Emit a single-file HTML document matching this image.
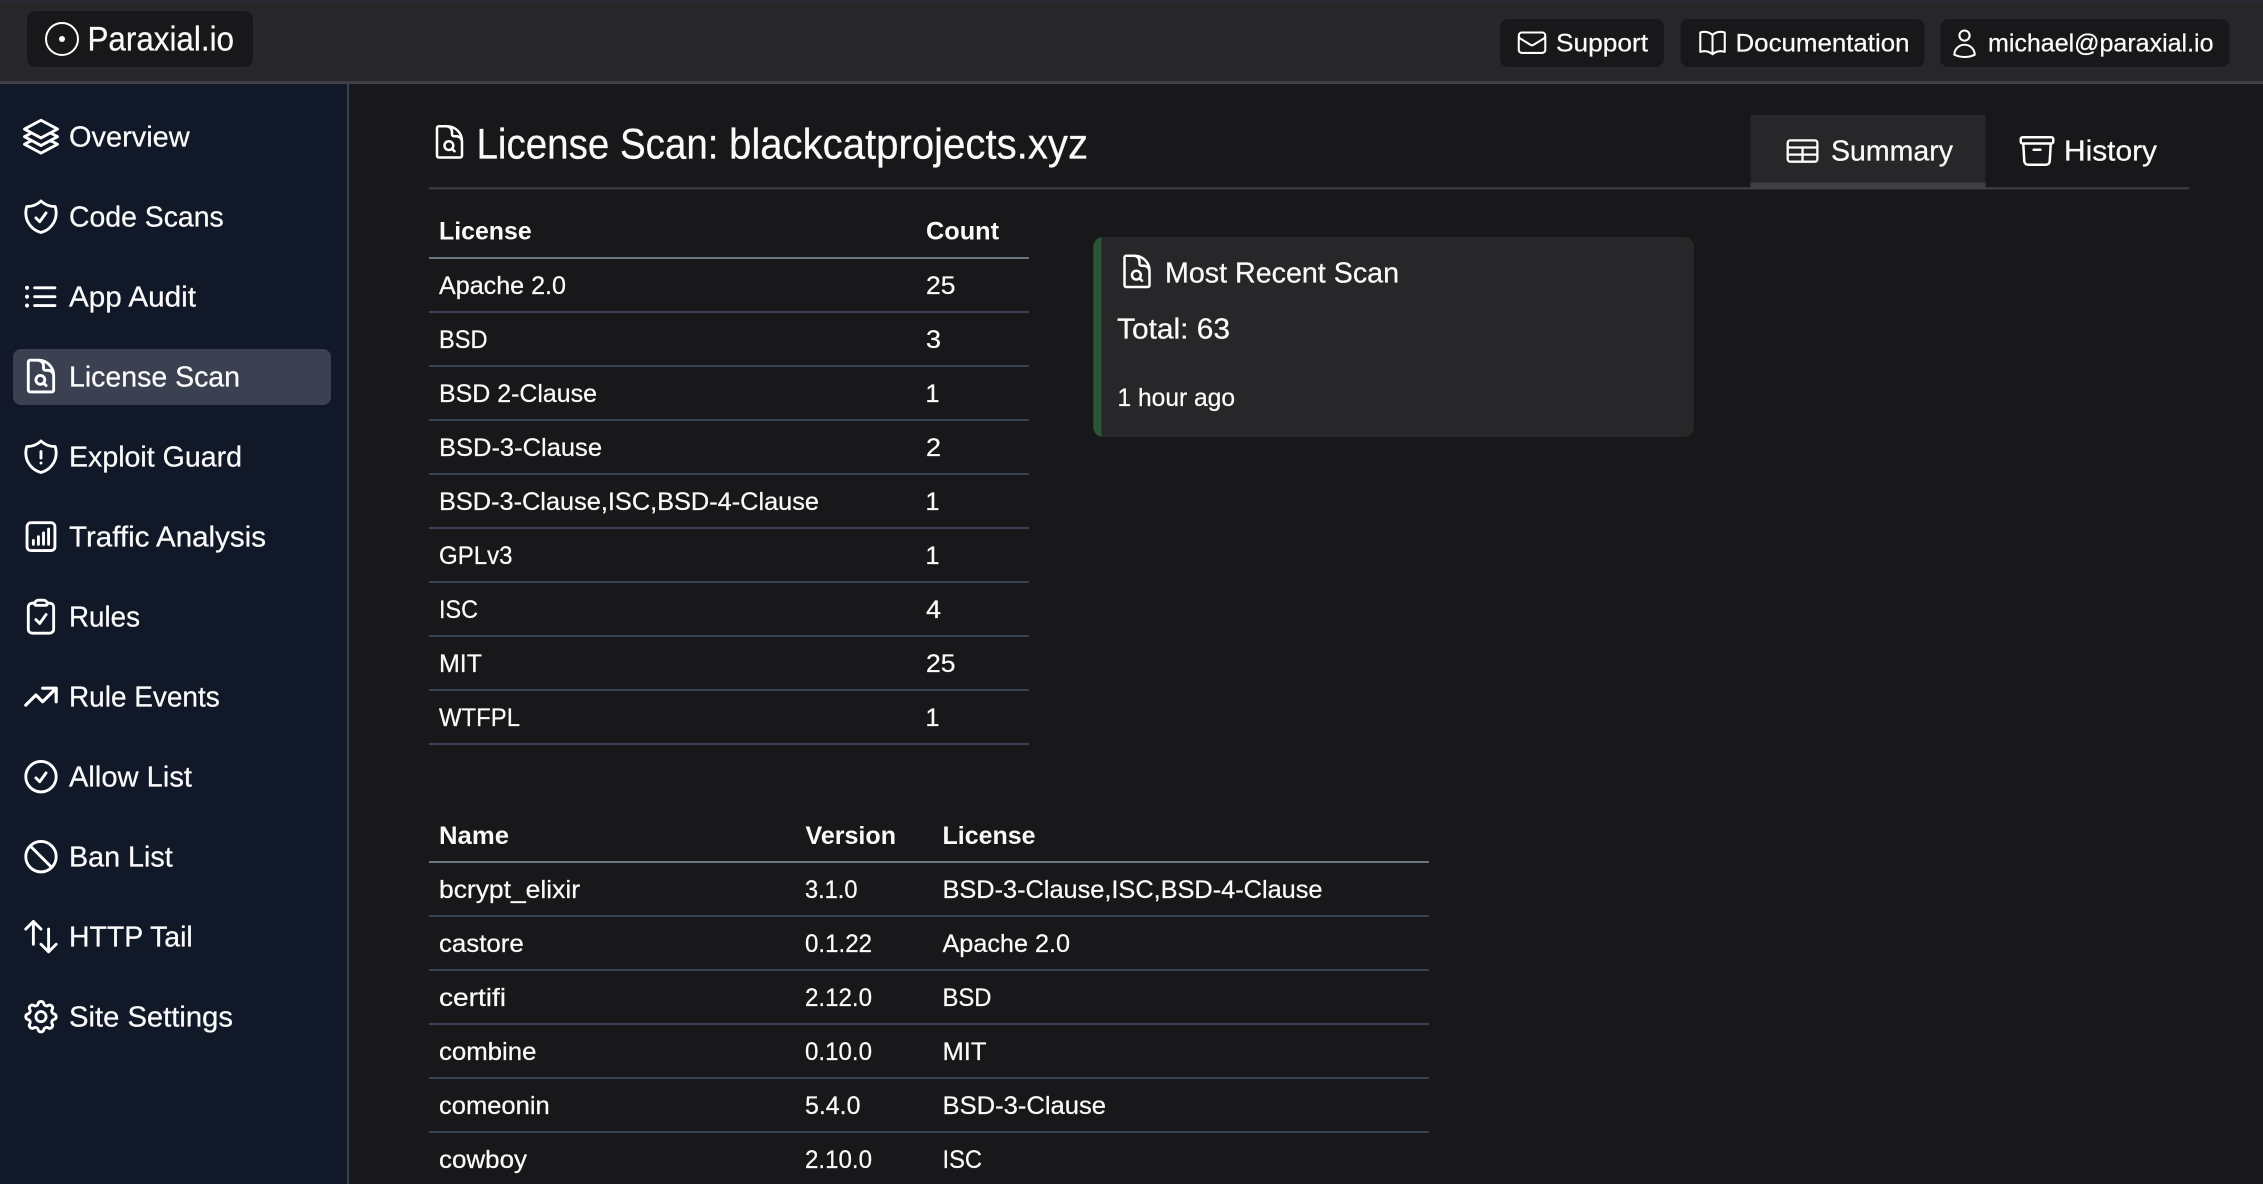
<!DOCTYPE html>
<html lang="en">
<head>
<meta charset="utf-8">
<title>License Scan: blackcatprojects.xyz</title>
<style>
html,body{margin:0;padding:0;background:#18181b;width:2263px;height:1184px;overflow:hidden}
svg{display:block}
text{font-family:"Liberation Sans",sans-serif;fill:#fafafa;stroke:#fafafa;stroke-width:.25px}
.n{font-size:28.6px}.t{font-size:25px}.b{font-size:25px;font-weight:700;stroke:none}
.i{fill:none;stroke:#fff;stroke-width:1.5;stroke-linecap:round;stroke-linejoin:round}
.s .i{stroke-width:1.7}
</style>
</head>
<body>
<svg xmlns="http://www.w3.org/2000/svg" width="2263" height="1184" viewBox="0 0 2263 1184">
<defs>
<path id="doc" d="M19.5 14.25v-2.625a3.375 3.375 0 0 0-3.375-3.375h-1.5A1.125 1.125 0 0 1 13.5 7.125v-1.5a3.375 3.375 0 0 0-3.375-3.375H8.25m5.231 13.481L15 17.25m-4.5-15H5.625c-.621 0-1.125.504-1.125 1.125v16.5c0 .621.504 1.125 1.125 1.125h12.75c.621 0 1.125-.504 1.125-1.125V11.25a9 9 0 0 0-9-9Zm3.75 11.625a2.625 2.625 0 1 1-5.25 0 2.625 2.625 0 0 1 5.25 0Z"/>
</defs>
<rect width="2263" height="1184" fill="#18181b"/>

<!-- header -->
<rect width="2263" height="81" fill="#27272a"/>
<rect width="2263" height="3" fill="#292a31"/>
<rect y="81" width="2263" height="3" fill="#3f3f46"/>
<rect x="27" y="11" width="226" height="56" rx="8" fill="#18181b"/>
<circle cx="62" cy="39" r="16" fill="none" stroke="#fff" stroke-width="2"/>
<circle cx="62" cy="39" r="3" fill="#fff"/>
<text x="87.5" y="50.7" font-size="34" textLength="146.5" lengthAdjust="spacingAndGlyphs">Paraxial.io</text>

<rect x="1500" y="19" width="164" height="48" rx="8" fill="#18181b"/>
<g transform="translate(1515.7 26.4) scale(1.36)"><path class="i" d="M21.75 6.75v10.5a2.25 2.25 0 0 1-2.25 2.25h-15a2.25 2.25 0 0 1-2.25-2.25V6.75m19.5 0A2.25 2.25 0 0 0 19.5 4.5h-15a2.25 2.25 0 0 0-2.25 2.25m19.5 0v.243a2.25 2.25 0 0 1-1.07 1.916l-7.5 4.615a2.25 2.25 0 0 1-2.36 0L3.32 8.91a2.25 2.25 0 0 1-1.07-1.916V6.75"/></g>
<text class="t" x="1556" y="51.7" textLength="92" lengthAdjust="spacingAndGlyphs">Support</text>

<rect x="1680.5" y="19" width="244" height="48" rx="8" fill="#18181b"/>
<g transform="translate(1696.2 26.7) scale(1.36)"><path class="i" d="M12 6.042A8.967 8.967 0 0 0 6 3.75c-1.052 0-2.062.18-3 .512v14.25A8.987 8.987 0 0 1 6 18c2.305 0 4.408.867 6 2.292m0-14.25a8.966 8.966 0 0 1 6-2.292c1.052 0 2.062.18 3 .512v14.25A8.987 8.987 0 0 0 18 18a8.967 8.967 0 0 0-6 2.292m0-14.25v14.25"/></g>
<text class="t" x="1735.5" y="51.7" textLength="174" lengthAdjust="spacingAndGlyphs">Documentation</text>

<rect x="1940.5" y="19" width="289" height="48" rx="8" fill="#18181b"/>
<g transform="translate(1948.2 27.4) scale(1.36)"><path class="i" d="M15.75 6a3.75 3.75 0 1 1-7.5 0 3.75 3.75 0 0 1 7.5 0ZM4.501 20.118a7.5 7.5 0 0 1 14.998 0A17.933 17.933 0 0 1 12 21.75c-2.676 0-5.216-.584-7.499-1.632Z"/></g>
<text class="t" x="1988" y="51.7" textLength="225.5" lengthAdjust="spacingAndGlyphs">michael@paraxial.io</text>

<!-- sidebar -->
<rect y="84" width="347" height="1100" fill="#111827"/>
<rect x="347" y="84" width="2" height="1100" fill="#374151"/>
<rect x="13" y="349" width="318" height="56" rx="8" fill="#3b4151"/>

<g class="s">
<g transform="translate(20.7 116.4) scale(1.69)"><path class="i" d="M6.429 9.75 2.25 12l4.179 2.25m0-4.5 5.571 3 5.571-3m-11.142 0L2.25 7.5 12 2.25l9.75 5.25-4.179 2.25m0 0L21.75 12l-4.179 2.25m0 0 4.179 2.25L12 21.75 2.25 16.5l4.179-2.25m11.142 0-5.571 3-5.571-3"/></g>
<g transform="translate(20.7 196.4) scale(1.69)"><path class="i" d="M9 12.75 11.25 15 15 9.75m-3-7.036A11.959 11.959 0 0 1 3.598 6 11.99 11.99 0 0 0 3 9.749c0 5.592 3.824 10.29 9 11.623 5.176-1.332 9-6.03 9-11.622 0-1.31-.21-2.571-.598-3.751h-.152c-3.196 0-6.1-1.248-8.25-3.285Z"/></g>
<g transform="translate(20.7 276.4) scale(1.69)"><path class="i" d="M8.25 6.75h12M8.25 12h12m-12 5.25h12M3.75 6.75h.007v.008H3.75V6.75Zm.375 0a.375.375 0 1 1-.75 0 .375.375 0 0 1 .75 0ZM3.75 12h.007v.008H3.75V12Zm.375 0a.375.375 0 1 1-.75 0 .375.375 0 0 1 .75 0Zm-.375 5.25h.007v.008H3.75v-.008Zm.375 0a.375.375 0 1 1-.75 0 .375.375 0 0 1 .75 0Z"/></g>
<g transform="translate(20.7 356.4) scale(1.69)"><use href="#doc" class="i"/></g>
<g transform="translate(20.7 436.4) scale(1.69)"><path class="i" d="M12 9v3.75m0-10.036A11.959 11.959 0 0 1 3.598 6 11.99 11.99 0 0 0 3 9.75c0 5.592 3.824 10.29 9 11.622 5.176-1.332 9-6.03 9-11.622 0-1.31-.21-2.57-.598-3.75h-.152c-3.196 0-6.1-1.25-8.25-3.286Zm0 13.036h.008v.008H12v-.008Z"/></g>
<g transform="translate(20.7 516.4) scale(1.69)"><path class="i" d="M7.5 14.25v2.25m3-4.5v4.5m3-6.75v6.75m3-9v9M6 20.25h12A2.25 2.25 0 0 0 20.25 18V6A2.25 2.25 0 0 0 18 3.75H6A2.25 2.25 0 0 0 3.75 6v12A2.25 2.25 0 0 0 6 20.25Z"/></g>
<g transform="translate(20.7 596.4) scale(1.69)"><path class="i" d="M15.666 3.888A2.25 2.25 0 0 0 13.5 2.25h-3c-1.03 0-1.9.693-2.166 1.638m7.332 0c.055.194.084.4.084.612v0a.75.75 0 0 1-.75.75H9a.75.75 0 0 1-.75-.75v0c0-.212.03-.418.084-.612m7.332 0c.646.049 1.288.11 1.927.184 1.1.128 1.907 1.077 1.907 2.185V19.5a2.25 2.25 0 0 1-2.25 2.25H6.75A2.25 2.25 0 0 1 4.5 19.5V6.257c0-1.108.806-2.057 1.907-2.185a48.208 48.208 0 0 1 1.927-.184M9 13.75 11.25 16 15 10.75"/></g>
<g transform="translate(20.7 676.4) scale(1.69)"><path class="i" style="stroke-width:1.85" d="M13 7h8m0 0v8m0-8l-8 8-4-4-6 6"/></g>
<g transform="translate(20.7 756.4) scale(1.69)"><path class="i" d="M9 12.75 11.25 15 15 9.75M21 12a9 9 0 1 1-18 0 9 9 0 0 1 18 0Z"/></g>
<g transform="translate(20.7 836.4) scale(1.69)"><path class="i" d="M18.364 18.364A9 9 0 0 0 5.636 5.636m12.728 12.728A9 9 0 0 1 5.636 5.636m12.728 12.728L5.636 5.636"/></g>
<g transform="translate(20.7 916.4) scale(1.69)"><path class="i" d="M3 7.5 7.5 3m0 0L12 7.5M7.5 3v13.5m13.5 0L16.5 21m0 0L12 16.5m4.5 4.5V7.5"/></g>
<g transform="translate(20.7 996.4) scale(1.69)"><path class="i" d="M10.325 4.317c.426-1.756 2.924-1.756 3.35 0a1.724 1.724 0 002.573 1.066c1.543-.94 3.31.826 2.37 2.37a1.724 1.724 0 001.065 2.572c1.756.426 1.756 2.924 0 3.35a1.724 1.724 0 00-1.066 2.573c.94 1.543-.826 3.31-2.37 2.37a1.724 1.724 0 00-2.572 1.065c-.426 1.756-2.924 1.756-3.35 0a1.724 1.724 0 00-2.573-1.066c-1.543.94-3.31-.826-2.37-2.37a1.724 1.724 0 00-1.065-2.572c-1.756-.426-1.756-2.924 0-3.35a1.724 1.724 0 001.066-2.573c-.94-1.543.826-3.31 2.37-2.37.996.608 2.296.07 2.572-1.065zM15 12a3 3 0 11-6 0 3 3 0 016 0z"/></g>
</g>

<text class="n" x="69" y="146.7" textLength="120.7" lengthAdjust="spacingAndGlyphs">Overview</text>
<text class="n" x="69" y="226.7" textLength="154.7" lengthAdjust="spacingAndGlyphs">Code Scans</text>
<text class="n" x="69" y="306.7" textLength="127" lengthAdjust="spacingAndGlyphs">App Audit</text>
<text class="n" x="69" y="386.7" textLength="171" lengthAdjust="spacingAndGlyphs">License Scan</text>
<text class="n" x="69" y="466.7" textLength="173" lengthAdjust="spacingAndGlyphs">Exploit Guard</text>
<text class="n" x="69" y="546.7" textLength="197" lengthAdjust="spacingAndGlyphs">Traffic Analysis</text>
<text class="n" x="69" y="626.7" textLength="71" lengthAdjust="spacingAndGlyphs">Rules</text>
<text class="n" x="69" y="706.7" textLength="150.7" lengthAdjust="spacingAndGlyphs">Rule Events</text>
<text class="n" x="69" y="786.7" textLength="123" lengthAdjust="spacingAndGlyphs">Allow List</text>
<text class="n" x="69" y="866.7" textLength="103.7" lengthAdjust="spacingAndGlyphs">Ban List</text>
<text class="n" x="69" y="946.7" textLength="123.7" lengthAdjust="spacingAndGlyphs">HTTP Tail</text>
<text class="n" x="69" y="1026.7" textLength="164" lengthAdjust="spacingAndGlyphs">Site Settings</text>

<!-- title + tabs -->
<g transform="translate(429.5 122.5) scale(1.667)"><use href="#doc" class="i"/></g>
<text x="476.5" y="158.3" font-size="42.5" textLength="242" lengthAdjust="spacingAndGlyphs">License Scan:</text>
<text x="729" y="158.3" font-size="42.5" textLength="359" lengthAdjust="spacingAndGlyphs">blackcatprojects.xyz</text>
<rect x="429" y="187.3" width="1760" height="2" fill="#3f3f46"/>
<rect x="1750.5" y="115" width="235" height="68" fill="#27272a"/>
<rect x="1750.5" y="182.7" width="235" height="6.6" fill="#3f3f46"/>
<g transform="translate(1784.3 132.8) scale(1.52)" class="i"><rect x="2.25" y="5" width="19.5" height="14" rx="1.6" fill="none"/><path d="M2.25 9.67h19.5M2.25 14.33h19.5M12 9.67V19" fill="none"/></g>
<text class="n" x="1831" y="160.3" textLength="122" lengthAdjust="spacingAndGlyphs">Summary</text>
<g transform="translate(2017 131) scale(1.667)"><path class="i" d="m20.25 7.5-.625 10.632a2.25 2.25 0 0 1-2.247 2.118H6.622a2.25 2.25 0 0 1-2.247-2.118L3.75 7.5M10 11.25h4M3.375 7.5h17.25c.621 0 1.125-.504 1.125-1.125v-1.5c0-.621-.504-1.125-1.125-1.125H3.375c-.621 0-1.125.504-1.125 1.125v1.5c0 .621.504 1.125 1.125 1.125Z"/></g>
<text class="n" x="2064" y="160.3" textLength="93" lengthAdjust="spacingAndGlyphs">History</text>

<!-- license summary table -->
<text class="b" x="439" y="239.3" textLength="92.7" lengthAdjust="spacingAndGlyphs">License</text>
<text class="b" x="926" y="239.3" textLength="73" lengthAdjust="spacingAndGlyphs">Count</text>
<rect x="429" y="257" width="600" height="2" fill="#6b7280"/>
<g fill="#374151">
<rect x="429" y="311" width="600" height="2"/><rect x="429" y="365" width="600" height="2"/><rect x="429" y="419" width="600" height="2"/><rect x="429" y="473" width="600" height="2"/><rect x="429" y="527" width="600" height="2"/><rect x="429" y="581" width="600" height="2"/><rect x="429" y="635" width="600" height="2"/><rect x="429" y="689" width="600" height="2"/><rect x="429" y="743" width="600" height="2"/>
</g>
<text class="t" x="439" y="294" textLength="127" lengthAdjust="spacingAndGlyphs">Apache 2.0</text>
<text class="t" x="439" y="348" textLength="48.5" lengthAdjust="spacingAndGlyphs">BSD</text>
<text class="t" x="439" y="402" textLength="158" lengthAdjust="spacingAndGlyphs">BSD 2-Clause</text>
<text class="t" x="439" y="456" textLength="163" lengthAdjust="spacingAndGlyphs">BSD-3-Clause</text>
<text class="t" x="439" y="510" textLength="380" lengthAdjust="spacingAndGlyphs">BSD-3-Clause,ISC,BSD-4-Clause</text>
<text class="t" x="439" y="564" textLength="73.5" lengthAdjust="spacingAndGlyphs">GPLv3</text>
<text class="t" x="439" y="618" textLength="39" lengthAdjust="spacingAndGlyphs">ISC</text>
<text class="t" x="439" y="672" textLength="43" lengthAdjust="spacingAndGlyphs">MIT</text>
<text class="t" x="439" y="726" textLength="81" lengthAdjust="spacingAndGlyphs">WTFPL</text>
<text class="t" x="926" y="294" textLength="29.5" lengthAdjust="spacingAndGlyphs">25</text>
<text class="t" x="926" y="348" textLength="15" lengthAdjust="spacingAndGlyphs">3</text>
<text class="t" x="925.5" y="402" textLength="14" lengthAdjust="spacingAndGlyphs">1</text>
<text class="t" x="926" y="456" textLength="15" lengthAdjust="spacingAndGlyphs">2</text>
<text class="t" x="925.5" y="510" textLength="14" lengthAdjust="spacingAndGlyphs">1</text>
<text class="t" x="925.5" y="564" textLength="14" lengthAdjust="spacingAndGlyphs">1</text>
<text class="t" x="926" y="618" textLength="15" lengthAdjust="spacingAndGlyphs">4</text>
<text class="t" x="926" y="672" textLength="29.5" lengthAdjust="spacingAndGlyphs">25</text>
<text class="t" x="925.5" y="726" textLength="14" lengthAdjust="spacingAndGlyphs">1</text>

<!-- card -->
<rect x="1093.3" y="237" width="600" height="200" rx="10" fill="#2a5636"/>
<path d="M1101.4 237H1683a10 10 0 0 1 10 10V427a10 10 0 0 1-10 10H1101.4Z" fill="#27272a"/>
<g transform="translate(1117 252) scale(1.667)"><use href="#doc" class="i"/></g>
<text class="n" x="1165" y="282.7" textLength="234" lengthAdjust="spacingAndGlyphs">Most Recent Scan</text>
<text class="n" x="1117" y="338.3" textLength="113" lengthAdjust="spacingAndGlyphs">Total: 63</text>
<text class="t" x="1117.5" y="406" textLength="117.5" lengthAdjust="spacingAndGlyphs">1 hour ago</text>

<!-- dependency table -->
<text class="b" x="439" y="844" textLength="70" lengthAdjust="spacingAndGlyphs">Name</text>
<text class="b" x="805.5" y="844" textLength="90.5" lengthAdjust="spacingAndGlyphs">Version</text>
<text class="b" x="942.5" y="844" textLength="93" lengthAdjust="spacingAndGlyphs">License</text>
<rect x="429" y="861" width="1000" height="2" fill="#6b7280"/>
<g fill="#374151">
<rect x="429" y="915" width="1000" height="2"/><rect x="429" y="969" width="1000" height="2"/><rect x="429" y="1023" width="1000" height="2"/><rect x="429" y="1077" width="1000" height="2"/><rect x="429" y="1131" width="1000" height="2"/>
</g>
<text class="t" x="439" y="898" textLength="141" lengthAdjust="spacingAndGlyphs">bcrypt_elixir</text>
<text class="t" x="805" y="898" textLength="52.5" lengthAdjust="spacingAndGlyphs">3.1.0</text>
<text class="t" x="942.5" y="898" textLength="380" lengthAdjust="spacingAndGlyphs">BSD-3-Clause,ISC,BSD-4-Clause</text>
<text class="t" x="439" y="952" textLength="84.8" lengthAdjust="spacingAndGlyphs">castore</text>
<text class="t" x="805" y="952" textLength="67" lengthAdjust="spacingAndGlyphs">0.1.22</text>
<text class="t" x="942.5" y="952" textLength="127.5" lengthAdjust="spacingAndGlyphs">Apache 2.0</text>
<text class="t" x="439" y="1006" textLength="67" lengthAdjust="spacingAndGlyphs">certifi</text>
<text class="t" x="805" y="1006" textLength="67" lengthAdjust="spacingAndGlyphs">2.12.0</text>
<text class="t" x="942.5" y="1006" textLength="49" lengthAdjust="spacingAndGlyphs">BSD</text>
<text class="t" x="439" y="1060" textLength="97.4" lengthAdjust="spacingAndGlyphs">combine</text>
<text class="t" x="805" y="1060" textLength="67" lengthAdjust="spacingAndGlyphs">0.10.0</text>
<text class="t" x="942.5" y="1060" textLength="44" lengthAdjust="spacingAndGlyphs">MIT</text>
<text class="t" x="439" y="1114" textLength="110.7" lengthAdjust="spacingAndGlyphs">comeonin</text>
<text class="t" x="805" y="1114" textLength="55.5" lengthAdjust="spacingAndGlyphs">5.4.0</text>
<text class="t" x="942.5" y="1114" textLength="163.5" lengthAdjust="spacingAndGlyphs">BSD-3-Clause</text>
<text class="t" x="439" y="1168" textLength="88" lengthAdjust="spacingAndGlyphs">cowboy</text>
<text class="t" x="805" y="1168" textLength="67" lengthAdjust="spacingAndGlyphs">2.10.0</text>
<text class="t" x="942.5" y="1168" textLength="39.5" lengthAdjust="spacingAndGlyphs">ISC</text>
</svg>
</body>
</html>
